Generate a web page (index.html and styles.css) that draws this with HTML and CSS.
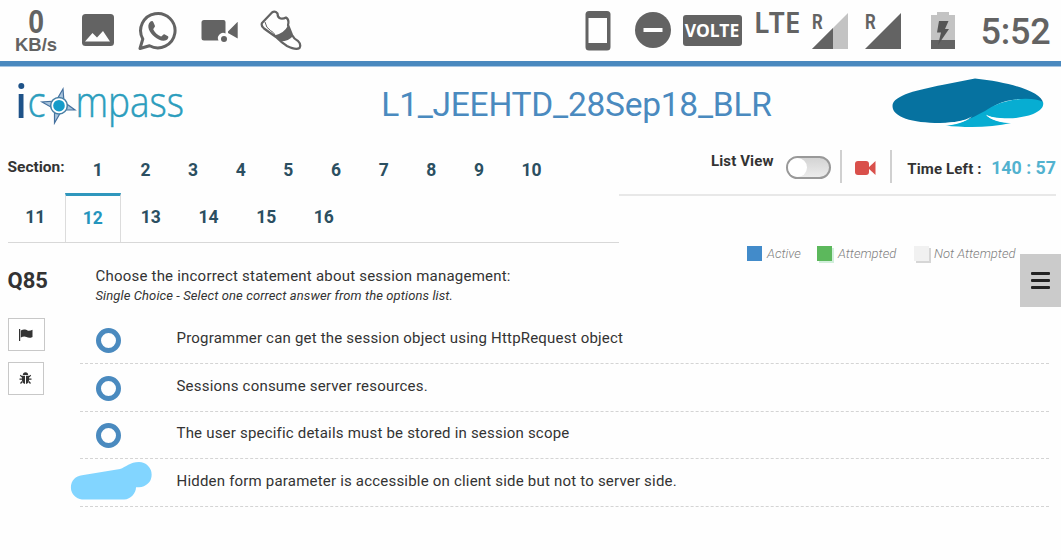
FILE: index.html
```html
<!DOCTYPE html>
<html lang="en">
<head>
<meta charset="utf-8">
<title>L1_JEEHTD_28Sep18_BLR</title>
<link rel="stylesheet" href="styles.css">
</head>
<body>
<div class="status">
  <div class="speed"><span class="speed-num">0</span><span class="speed-unit">KB/s</span></div>
  <svg class="ic-image" width="32" height="32" viewBox="0 0 32 32"><rect width="32" height="32" rx="3.5"/><path class="cut" d="M3 27.500L10.500 19L15 23.500L21 17L28 27.500Z"/></svg>
  <svg class="ic-chat" width="42" height="42" viewBox="0 0 42 42"><path class="line" d="M3 38.500L5.800 29A17.200 17.200 0 1 1 12.500 35.700Z"/><path d="M13.500 11.500C15 10.500 16 11 16.500 12.500L18 16C18.300 17 16 18.800 16.300 19.600C18 23 20.500 25 24 26.400C25 26.700 26.300 24 27.400 24.300L31 26.200C32 27 31 29 29.500 30C26 32 21 29.800 17.500 26.800C13 23 8.500 16 13.500 11.500Z"/></svg>
  <svg class="ic-cam" width="38" height="24" viewBox="0 0 38 24"><path d="M3 1H22.500Q24.500 1 24.500 3V14.500A5.200 5.200 0 0 0 17.500 21.500H3Q0.500 21.500 0.500 19V3.500Q0.500 1 3 1ZM27 12.500L36.700 2.800V19.500L27 14Z"/><circle cx="23" cy="20" r="3"/></svg>
  <svg class="ic-shoe" width="42" height="42" viewBox="0 0 42 42"><path class="outline" d="M2 13L12 2.500Q15 .5 17.500 3.500Q17.500 7.500 20.500 8.500Q23.500 9 26 7.500Q29.500 9.500 28 15L32 25Q34 29 38 31Q41.500 34.500 39.500 38Q36 40.500 27 36Q22 33 16 27L4 18.500Q.8 16 2 13Z"/><path d="M14.500 25.500Q24.500 23 28 15.500L33 26Q29 31 20.500 31.500Z"/><path class="thin" d="M5 12Q6 18 10.500 20.500Q14 22.500 15 25"/></svg>
  <svg class="ic-phone" width="26" height="40" viewBox="0 0 26 40"><rect x=".5" width="25" height="39.500" rx="3.500"/><rect class="cut" x="3.500" y="7" width="18.500" height="25"/></svg>
  <svg class="ic-dnd" width="36" height="36" viewBox="0 0 36 36"><circle cx="18" cy="18" r="18"/><path class="cut" d="M8.500 16H27.500V20H8.500Z"/></svg>
  <span class="volte">VOLTE</span>
  <span class="lte">LTE</span>
  <div class="signal"><svg width="38" height="38" viewBox="0 0 38 38"><path class="pale" d="M1 37L37 1V37Z"/><path d="M1 37L22 16V37Z"/></svg><span class="roam">R</span></div>
  <div class="signal"><svg width="38" height="38" viewBox="0 0 38 38"><path d="M1 37L37 1V37Z"/></svg><span class="roam">R</span></div>
  <svg class="ic-batt" width="24" height="37" viewBox="0 0 24 37"><path class="pale" d="M0 3H6V0H18V3H24V37H0Z"/><path d="M0 28H24V37H0Z"/><path class="bolt" d="M8 9H17.500L14 17H18L7 33L10 20.500H6Z"/></svg>
  <span class="clock">5:52</span>
</div>

<header class="head">
  <svg class="logo" width="180" height="74" viewBox="0 -10 180 74"><circle class="navy" cx="13.300" cy="9" r="3"/><rect class="navy" x="10.700" y="17" width="4.800" height="24"/>
    <text class="word" x="19.500" y="40" textLength="18" lengthAdjust="spacingAndGlyphs">c</text>
    <text class="word" x="67.500" y="40" textLength="108.500" lengthAdjust="spacingAndGlyphs">mpass</text>
    <path class="star" d="M55 12L56 25L67 33L54 33L46.500 46L46.500 32L34 25L48 24Z"/><circle class="ring" cx="51" cy="28.700" r="8.300"/><circle class="core" cx="51" cy="28.700" r="5.800"/></svg>
  <h1 class="title">L1_JEEHTD_28Sep18_BLR</h1>
  <svg class="brand" width="154" height="50" viewBox="0 0 154 50"><path class="deep" d="M.5 28C.5 17 28 11.500 50 7L83 .5C118 4 150 14 151 25C137 19 117 20 104 27C92 34 83 44.500 48 45C20 45 .5 39 .5 28Z"/><path class="cyan" d="M53 47.500C68 46 78 41 93 33C110 20 140 18 151 24C154 35 130 42 108 40C100 39.500 97 38 94 37C98 41 108 44.500 119 45C100 49.500 75 50 53 47.500Z"/><path class="gap" d="M44 45.500C62 45 72 43 80 38.500C73 44 64 47 52 48ZM94 36.500C97 38.500 101 40 108 40.300C113 41 117 42 120 45C108 45 98 42 94 36.500Z"/></svg>
</header>

<div class="bar">
  <nav class="sections">
    <div class="tabs first"><span class="label">Section:</span><a>1</a><a>2</a><a>3</a><a>4</a><a>5</a><a>6</a><a>7</a><a>8</a><a>9</a><a>10</a></div>
    <div class="tabs second"><a>11</a><a class="on">12</a><a>13</a><a>14</a><a>15</a><a>16</a></div>
  </nav>
  <div class="side">
    <div class="tools">
      <span class="listview">List View</span>
      <span class="toggle"><i></i></span>
      <span class="record"><svg width="21" height="14" viewBox="0 0 21 14"><rect width="14" height="14" rx="3"/><path d="M13 7L20.500 0V14Z"/></svg></span>
      <span class="left">Time Left :</span><span class="time">140 : 57</span>
    </div>
    <div class="legend"><i class="sw active"></i><span class="t1">Active</span><i class="sw done"></i><span class="t2">Attempted</span><i class="sw none"></i><span class="t3">Not Attempted</span></div>
  </div>
</div>
<button class="menu" aria-label="Menu"><i></i><i></i><i></i></button>

<main class="main">
  <aside class="aside">
    <div class="qno">Q85</div>
    <button class="btn flag" aria-label="Flag"><svg width="14" height="12" viewBox="0 0 14 12"><path d="M0 0H1.200V12H0ZM1.800 1.500C5 -.2 7 .8 8.500 1.500Q10.500 2.300 13.500 .8V8C10.500 9.500 9 8.700 7.500 8Q5 7 1.800 8.500Z"/></svg></button>
    <button class="btn bug" aria-label="Report"><svg width="13" height="13" viewBox="0 0 13 13"><path d="M3.800 3Q4 .3 6.500 .3Q9 .3 9.200 3ZM3 3.700H6V12Q3.300 11.500 3 8.500ZM7 3.700H10V8.500Q9.700 11.500 7 12Z"/><path class="legs" d="M3 5L1.300 3.200M3 7.200H.5M3.300 9.500L1.500 11.500M10 5L11.700 3.200M10 7.200H12.500M9.700 9.500L11.500 11.500"/></svg></button>
  </aside>
  <section class="body">
    <p class="question">Choose the incorrect statement about session management:</p>
    <p class="hint">Single Choice - Select one correct answer from the options list.</p>
    <ul class="options">
      <li><i class="radio"></i><span>Programmer can get the session object using HttpRequest object</span></li>
      <li><i class="radio"></i><span>Sessions consume server resources.</span></li>
      <li><i class="radio"></i><span>The user specific details must be stored in session scope</span></li>
      <li><svg class="mark" width="82" height="40" viewBox="0 0 82 40"><path d="M12 15.200L50 9C56 7 60 2 69 2A12.500 12.500 0 0 1 69 27.300H66C66 33 61 39.500 54 39.500H12A12.200 12.200 0 0 1 12 15.200Z"/></svg><span class="marked">Hidden form parameter is accessible on client side but not to server side.</span></li>
    </ul>
  </section>
</main>
</body>
</html>
```
FILE: styles.css
```css
* { box-sizing: border-box; margin: 0; padding: 0; }
body { width: 1061px; height: 560px; overflow: hidden; background: #fefefe; color: #333; font-family: Roboto, sans-serif; position: relative; }
svg { display: block; flex: none; }
button { border: 0; font: inherit; }

.status { display: flex; align-items: flex-start; height: 67px; border-bottom: 1px solid #a6c5e2; box-shadow: inset 0 -5px #4a89bf; color: #636363; fill: #636363; white-space: nowrap; }
.status .cut { fill: #fefefe; }
.status .pale { fill: #c3c3c3; }
.status .bolt { fill: #555; }
.status .line { fill: none; stroke: #636363; stroke-width: 3; stroke-linejoin: round; }
.status .outline { fill: none; stroke: #636363; stroke-width: 2.200; stroke-linejoin: round; }
.status .thin { fill: none; stroke: #636363; stroke-width: 1; }
.speed { display: flex; flex-direction: column; align-items: center; width: 44px; margin: 6px 0 0 14px; font-family: "Liberation Sans", sans-serif; font-weight: bold; }
.speed-num { font-size: 33px; line-height: 31px; transform: scaleX(.86); }
.speed-unit { font-size: 18.500px; line-height: 16px; }
.ic-image { margin: 14px 0 0 23.500px; }
.ic-chat { margin: 10px 0 0 23.500px; }
.ic-cam { margin: 19px 0 0 22px; }
.ic-shoe { margin: 10px 0 0 20.500px; }
.ic-phone { margin: 11px 0 0 283.500px; }
.ic-dnd { margin: 12px 0 0 24px; }
.volte { width: 59px; height: 31px; margin: 15px 0 0 11.500px; border-radius: 3px; background: #636363; color: #fff; font: bold 17.500px/31px "Noto Sans", sans-serif; text-align: center; }
.lte { width: 46px; margin: 7px 0 0 12.500px; font: 600 28px/30px "Noto Sans", sans-serif; }
.signal { position: relative; width: 38px; margin: 12px 15px 0 0; }
.lte + .signal { margin-left: 10.500px; }
.roam { position: absolute; left: 1px; top: 0; font-size: 21px; line-height: 20px; font-weight: 700; transform: scaleX(.8); transform-origin: left; }
.ic-batt { margin: 12px 0 0 14px; }
.clock { margin: 11px 0 0 26px; font-size: 36px; line-height: 42px; font-weight: 500; letter-spacing: -.2px; }

.head { display: flex; align-items: flex-start; height: 74px; }
.logo { margin: 0 0 0 8px; }
.word { font: 300 43px "Open Sans", sans-serif; fill: #2b9dbd; stroke: #2b9dbd; stroke-width: .5px; }
.navy { fill: #1e5288; }
.star { fill: #a9c4dc; stroke: #44709e; stroke-width: 1.200px; }
.ring { fill: #fff; stroke: #477fa5; stroke-width: 1.500px; }
.core { fill: #159bc9; }
.title { width: 420px; margin: 18px 0 0 178.500px; text-align: center; font-size: 33.500px; letter-spacing: -.25px; line-height: 40px; font-weight: 400; color: #4a8abf; }
.brand { margin: 11px 0 0 105.500px; }
.deep { fill: #0672a0; }
.cyan { fill: #07add2; }
.gap { fill: #fff; }

.bar { display: flex; align-items: flex-start; height: 113px; padding: 5px 5px 0 8px; }
.sections { width: 611px; height: 97px; border-bottom: 1px solid #d8d8d8; }
.tabs { display: flex; height: 48px; font-size: 17.500px; font-weight: 700; color: #2b4f61; }
.tabs a { padding: 0 18.800px; line-height: 49px; }
.first .label { width: 66.500px; margin-left: -.5px; font-size: 15.500px; line-height: 42px; color: #333; }
.tabs.second { height: 49px; margin-left: -1.500px; }
.second a { line-height: 46px; }
.second a.on { height: 49px; margin: -1px 1px 0 .500px; padding: 0 17.100px; border: solid #dcdcdc; border-width: 3px 1px 0; border-top-color: #2f97bd; background: #fefefe; line-height: 44px; color: #2495bd; }
.side { width: 437px; }
.tools { display: flex; align-items: flex-start; height: 50px; border-bottom: 2px solid #e8e8e8; white-space: nowrap; font-weight: 700; }
.listview { width: 75px; margin: 6px 0 0 92px; font-size: 15px; letter-spacing: .12px; line-height: 18px; }
.toggle { width: 45px; height: 23px; margin-top: 10px; border: 2px solid #999; border-radius: 12px; background: linear-gradient(#d4d4d4, #ececec); }
.toggle i { display: block; width: 19px; height: 19px; border-radius: 50%; background: #fff; }
.record { display: flex; align-items: center; justify-content: center; width: 52px; height: 33px; margin: 4px 0 0 9px; padding-top: 2px; border: solid #d0d0d0; border-width: 0 2px; fill: #d9504b; }
.left { width: 84px; margin: 14px 0 0 15.500px; font-size: 15px; letter-spacing: .15px; line-height: 18px; }
.time { font-size: 17.800px; line-height: 24px; margin-top: 10px; color: #52b2cf; }
.legend { display: flex; align-items: center; margin: 49.500px 0 0 128px; height: 16px; white-space: nowrap; font-size: 13px; font-style: italic; font-weight: 300; color: #808080; }
.legend span { margin-top: -1px; }
.sw { width: 15px; height: 15px; flex: none; }
.active { background: #428bca; }
.done { background: #5cb85c; box-shadow: 2px 2px #d2efdc; }
.none { background: #f1f1f1; box-shadow: 2px 2px #d6d6d6; }
.t1 { width: 50px; margin-left: 5px; }
.t2 { width: 76px; margin-left: 6px; }
.t3 { margin-left: 5px; }
.menu { position: absolute; right: 0; top: 254px; display: flex; flex-direction: column; align-items: center; justify-content: center; gap: 4px; width: 41px; height: 53px; background: #cbcbcb; }
.menu i { width: 19px; height: 3px; border-radius: 1px; background: #222; }

.main { display: flex; padding: 0 12px 0 7.500px; }
.aside { width: 72px; padding-top: 12px; }
.qno { height: 52px; font-size: 22px; line-height: 30px; font-weight: 700; }
.btn { display: flex; align-items: center; justify-content: center; width: 37px; height: 33px; margin-bottom: 11px; border: 1px solid #c8c8c8; background: #fff; fill: #333; }
.btn.bug { width: 36px; }
.legs { fill: none; stroke: #333; stroke-width: 1.200px; }
.body { flex: 1; padding-top: 13px; }
.question { padding-left: 16px; font-size: 15px; letter-spacing: .21px; line-height: 18px; white-space: nowrap; }
.hint { padding-left: 16px; margin-top: 2px; font-size: 13px; letter-spacing: .1px; line-height: 17px; font-style: italic; }
.options { margin-top: 12.500px; list-style: none; font-size: 15px; letter-spacing: .2px; white-space: nowrap; }
.options li { position: relative; display: flex; align-items: center; height: 47.500px; padding-left: 16px; border-bottom: 1px dashed #d4d4d4; }
.options span { margin-top: -3px; }
.radio { width: 25px; height: 25px; margin: 2px 56px 0 0; border: 5px solid #4a8abf; border-radius: 50%; }
.mark { position: absolute; left: -10px; top: 1px; fill: #82d5ff; }
.options .marked { margin-left: 81px; }
```
